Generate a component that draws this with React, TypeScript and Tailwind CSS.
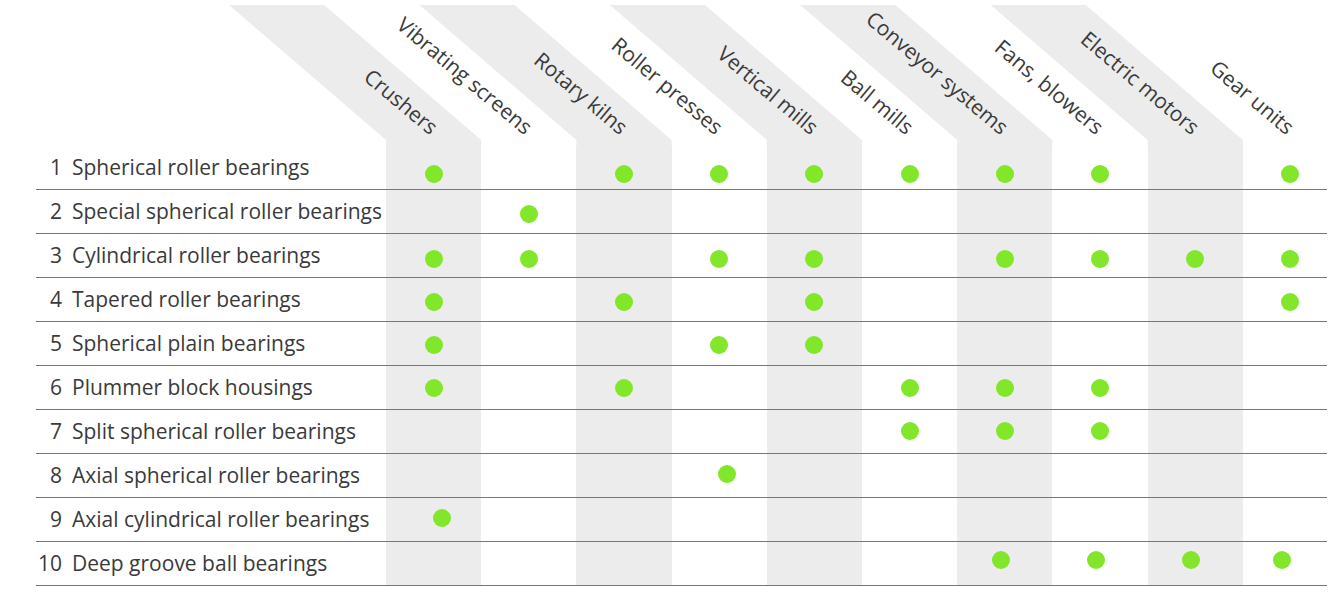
import React from "react";

const columns = [
  "Crushers",
  "Vibrating screens",
  "Rotary kilns",
  "Roller presses",
  "Vertical mills",
  "Ball mills",
  "Conveyor systems",
  "Fans, blowers",
  "Electric motors",
  "Gear units",
];

type Dot = { col: number; shift?: string };

const rows: { no: number; name: string; pad: string; dots: Dot[] }[] = [
  { no: 1, name: "Spherical roller bearings", pad: "pt-[19px]", dots: [1, 3, 4, 5, 6, 7, 8, 10].map((c) => ({ col: c })) },
  { no: 2, name: "Special spherical roller bearings", pad: "pt-[15px]", dots: [{ col: 2 }] },
  { no: 3, name: "Cylindrical roller bearings", pad: "pt-[16px]", dots: [1, 2, 4, 5, 7, 8, 9, 10].map((c) => ({ col: c })) },
  { no: 4, name: "Tapered roller bearings", pad: "pt-[15px]", dots: [1, 3, 5, 10].map((c) => ({ col: c })) },
  { no: 5, name: "Spherical plain bearings", pad: "pt-[14px]", dots: [1, 4, 5].map((c) => ({ col: c })) },
  { no: 6, name: "Plummer block housings", pad: "pt-[13px]", dots: [1, 3, 6, 7, 8].map((c) => ({ col: c })) },
  { no: 7, name: "Split spherical roller bearings", pad: "pt-[12px]", dots: [6, 7, 8].map((c) => ({ col: c })) },
  { no: 8, name: "Axial spherical roller bearings", pad: "pt-[11px]", dots: [{ col: 4, shift: "translate-x-[8px]" }] },
  { no: 9, name: "Axial cylindrical roller bearings", pad: "pt-[11px]", dots: [{ col: 1, shift: "translate-x-[8px]" }] },
  {
    no: 10,
    name: "Deep groove ball bearings",
    pad: "pt-[9px]",
    dots: [
      { col: 7, shift: "-translate-x-[4px]" },
      { col: 8, shift: "-translate-x-[4px]" },
      { col: 9, shift: "-translate-x-[4px]" },
      { col: 10, shift: "-translate-x-[8px]" },
    ],
  },
];

const colW = 95.2;

function Stripes() {
  const polys = [0, 2, 4, 6, 8].map((c) => {
    const x0 = 386 + colW * c;
    const x1 = x0 + colW;
    return `${x0 - 157},5 ${x1 - 157},5 ${x1},140 ${x1},146 ${x0},146 ${x0},140`;
  });
  return (
    <svg className="absolute inset-0" width="1338" height="146" viewBox="0 0 1338 146">
      {polys.map((p, i) => (
        <polygon key={i} points={p} fill="#ececec" />
      ))}
    </svg>
  );
}

export default function App() {
  return (
    <div className="w-[1338px] h-[600px] bg-white overflow-hidden font-['Open_Sans',sans-serif] text-[#3a3a3a]">
      <div className="relative h-[146px]">
        <Stripes />
        <div className="relative grid grid-cols-[386px_repeat(10,minmax(0,1fr))] h-full">
          <div />
          {columns.map((c) => (
            <div key={c} className="relative">
              <span className="absolute right-[calc(50%+6px)] bottom-[8px] origin-bottom-right rotate-[40deg] whitespace-nowrap text-[21px] leading-[21px]">
                {c}
              </span>
            </div>
          ))}
        </div>
      </div>

      {rows.map((r) => (
        <div key={r.no}>
          <div className="grid grid-cols-[386px_repeat(10,minmax(0,1fr))] h-[43px]">
            <div className="flex items-start pt-[11px] text-[21px] leading-[21px]">
              <span className="w-[62px] text-right">{r.no}</span>
              <span className="ml-[10px] whitespace-nowrap">{r.name}</span>
            </div>
            {columns.map((c, i) => {
              const dot = r.dots.find((d) => d.col === i + 1);
              return (
                <div
                  key={c}
                  className={`flex justify-center ${r.pad} ${i % 2 === 0 ? "bg-[#ececec]" : ""}`}
                >
                  {dot && (
                    <div className={`w-[18px] h-[18px] rounded-full bg-[#82e62a] ${dot.shift ?? ""}`} />
                  )}
                </div>
              );
            })}
          </div>
          <div className="ml-[36px] mr-[11px] h-px bg-[#777777]" />
        </div>
      ))}
    </div>
  );
}
